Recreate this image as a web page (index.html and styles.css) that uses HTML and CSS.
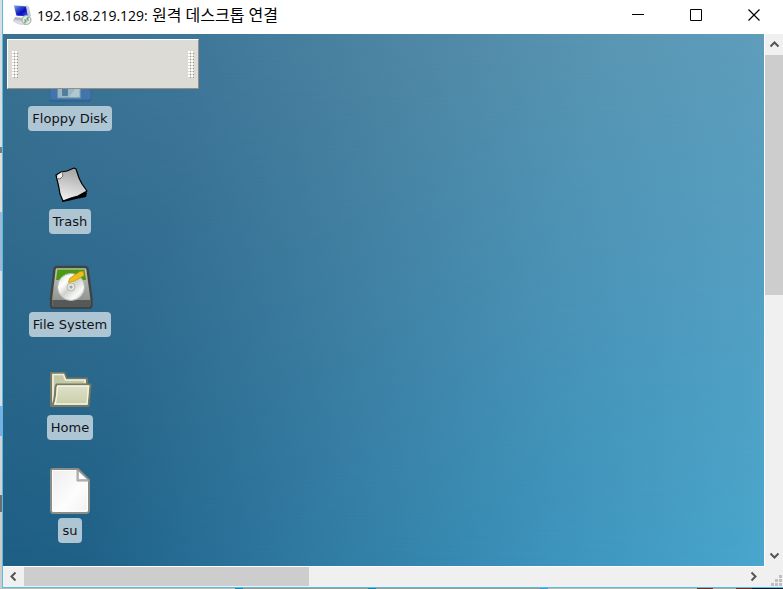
FILE: index.html
```
<!DOCTYPE html>
<html lang="ko">
<head>
<meta charset="utf-8">
<title>192.168.219.129: 원격 데스크톱 연결</title>
<link rel="stylesheet" href="styles.css">
</head>
<body>
<div class="window">
  <header class="titlebar">
    <svg class="app-icon" width="22" height="22" viewBox="0 0 22 22" aria-hidden="true">
      <defs>
        <linearGradient id="screen" x1="0" y1="0" x2="1" y2="1"><stop offset="0" stop-color="#8fa8e6"/><stop offset=".35" stop-color="#2a49c8"/><stop offset=".6" stop-color="#0a08c0"/><stop offset="1" stop-color="#4b6fe6"/></linearGradient>
      </defs>
      <path d="M3 13l9 1 1 7-7-1-5-3z" fill="#b4b8c4"/>
      <path d="M2 16l10 1v4l-6-1-4-2z" fill="#dadce2"/>
      <path d="M14 1l3 2 2 9-3 2z" fill="#c3c7d3"/>
      <path d="M1.500 1l13 1 2 11-12.500-1z" fill="#d5dbec"/>
      <path d="M2 1.500l12 1 2 10-11.500-1z" fill="url(#screen)"/>
      <circle cx="14.500" cy="16" r="4.500" fill="#e3e8e5" stroke="#a2aba6"/>
      <path d="M12.500 15.500l1.500 1.500-1.500 2M16.500 13l-1.500 2 1.500 1.500" fill="none" stroke="#5dab6e" stroke-width="1.400"/>
    </svg>
    <h1 class="title"><span class="address">192.168.219.129:</span> 원격 데스크톱 연결</h1>
    <div class="window-controls">
      <button type="button" aria-label="최소화"><svg width="14" height="14" viewBox="0 0 14 14"><path d="M1 6.500h12" stroke="#000"/></svg></button>
      <button type="button" aria-label="최대화"><svg width="14" height="14" viewBox="0 0 14 14"><path d="M1.500 1.500h11v11h-11z" fill="none" stroke="#000"/></svg></button>
      <button type="button" aria-label="닫기"><svg width="14" height="14" viewBox="0 0 14 14"><path d="M1.500 1.500l11 11M12.500 1.500l-11 11" stroke="#000" stroke-width="1.200"/></svg></button>
    </div>
  </header>

  <div class="viewport">
    <main class="desktop">
      <ul class="icons">
        <li class="item">
          <svg width="48" height="48" viewBox="0 0 48 48" aria-hidden="true">
            <path d="M4 44h41v3H4z" fill="#2c5f85" opacity=".6"/>
            <path d="M5 4h38q2 0 2 2v36q0 3-3 3H6q-2 0-2-3V6q0-2 1-2z" fill="#4176ad" stroke="#34699c"/>
            <path d="M11.500 28h23v15h-23z" fill="#9ab7c7" stroke="#6d8fa6"/>
            <path d="M23 42l10-13v13z" fill="#b0c8d2"/>
            <path d="M16.500 30h5v10.500h-5z" fill="#4b7ea5" stroke="#5a7d95"/>
          </svg>
          <span class="label">Floppy Disk</span>
        </li>
        <li class="item">
          <svg width="48" height="48" viewBox="0 0 48 48" aria-hidden="true">
            <defs><linearGradient id="sheet" x1=".6" y1="0" x2=".4" y2="1"><stop offset="0" stop-color="#a0a0a0"/><stop offset=".5" stop-color="#cacaca"/><stop offset="1" stop-color="#f1f1f1"/></linearGradient></defs>
            <path d="M17 40l22-7 2 2-1 4-10 2-8 2-6 1z" fill="#000"/>
            <path d="M10 17l5-3 6-1 7-3 2 1 3 9 3 6 5 7-9 5-7 2-8 3-3-7-1-6z" fill="url(#sheet)" stroke="#000" stroke-width="1.200" stroke-linejoin="round"/>
            <path d="M11 20l1-3 4-3v5l-3 1z" fill="#f0f0f0"/>
            <path d="M11 20.500l3 .5 3-3-1-3.500" fill="none" stroke="#757575"/>
          </svg>
          <span class="label">Trash</span>
        </li>
        <li class="item">
          <svg width="48" height="48" viewBox="0 0 48 48" aria-hidden="true">
            <defs>
              <linearGradient id="drive" x1="0" y1="0" x2="0" y2="1"><stop offset="0" stop-color="#c5c8c1"/><stop offset="1" stop-color="#858884"/></linearGradient>
              <linearGradient id="disc" x1="0" y1="0" x2="1" y2="1"><stop offset="0" stop-color="#d0d3cc"/><stop offset=".3" stop-color="#fff"/><stop offset=".5" stop-color="#d0d2cc"/><stop offset=".75" stop-color="#fafafa"/><stop offset="1" stop-color="#b6b8b3"/></linearGradient>
            </defs>
            <path d="M11 6h28q2 0 2.500 2l4 29v7q0 3-3 3H8q-3 0-3-3v-7L8.500 8q.5-2 2.500-2z" fill="url(#drive)" stroke="#3f4442" stroke-width="2.400"/>
            <path d="M11.500 8h27l1.500 11H10z" fill="#4c9a13"/>
            <path d="M12 8.500h26" stroke="#83bd59"/>
            <path d="M6.500 39h37.500v5q0 2-2 2H8.500q-2 0-2-2z" fill="#555957"/>
            <circle cx="25" cy="26" r="13.500" fill="url(#disc)" stroke="#b4b7b1"/>
            <circle cx="25" cy="26" r="4" fill="#e3e5e1" stroke="#b4b8b3"/>
            <circle cx="25" cy="26" r="1.500" fill="#9da39f"/>
            <path d="M22.500 21.500l1-4L34 10.500l3.500 0 .5 4-9.500 5.500z" fill="#eebf1c" stroke="#c1960f" stroke-width=".8" stroke-linejoin="round"/>
          </svg>
          <span class="label">File System</span>
        </li>
        <li class="item">
          <svg width="48" height="48" viewBox="0 0 48 48" aria-hidden="true">
            <defs><linearGradient id="folder" x1="0" y1="0" x2="0" y2="1"><stop offset="0" stop-color="#e0e3cb"/><stop offset="1" stop-color="#c8cda6"/></linearGradient></defs>
            <path d="M5 9h13.500l2 5.500H41v10l-3 17.500H5z" fill="#c4c9a5" stroke="#777963" stroke-width="2" stroke-linejoin="round"/>
            <path d="M7 40V10.500h10.500l2 5.500H39v3" fill="none" stroke="#f0f1e3" stroke-width="1.600"/>
            <path d="M10.500 20.500H44.500l-2 21.500H6q3-5 3.500-19z" fill="url(#folder)" stroke="#777963" stroke-width="2" stroke-linejoin="round"/>
            <path d="M12 22h30.500L41 40H9q2-6 2.500-17z" fill="none" stroke="#f2f4e6" stroke-width="1.400"/>
          </svg>
          <span class="label">Home</span>
        </li>
        <li class="item">
          <svg width="48" height="48" viewBox="0 0 48 48" aria-hidden="true">
            <defs><linearGradient id="page" x1="0" y1="0" x2="1" y2="1"><stop offset="0" stop-color="#ededed"/><stop offset=".6" stop-color="#fdfdfd"/><stop offset="1" stop-color="#f0f0f0"/></linearGradient></defs>
            <path d="M7 2h25l11 11v30q0 3-3 3H7q-2 0-2-3V4q0-2 2-2z" fill="url(#page)" stroke="#8b8d89" stroke-width="2"/>
            <path d="M6.500 44V3.500H31M41.500 15v29H7" fill="none" stroke="#fff"/>
            <path d="M31 3v11h12z" fill="#b9bab7" stroke="#a2a4a0" stroke-linejoin="round"/>
            <path d="M33 5v7h7.500z" fill="#fff"/>
          </svg>
          <span class="label">su</span>
        </li>
      </ul>
      <div class="panel"><span class="grip"></span><span class="grip"></span></div>
    </main>

    <div class="scrollbar vertical">
      <button type="button" aria-label="위로"><svg width="11" height="11" viewBox="0 0 11 11"><path d="M1.500 7.500l4-4 4 4"/></svg></button>
      <div class="track"><div class="thumb"></div></div>
      <button type="button" aria-label="아래로"><svg width="11" height="11" viewBox="0 0 11 11"><path d="M1.500 3.500l4 4 4-4"/></svg></button>
    </div>
    <div class="scrollbar horizontal">
      <button type="button" aria-label="왼쪽으로"><svg width="11" height="11" viewBox="0 0 11 11"><path d="M7.500 1.500l-4 4 4 4"/></svg></button>
      <div class="track"><div class="thumb"></div></div>
      <button type="button" aria-label="오른쪽으로"><svg width="11" height="11" viewBox="0 0 11 11"><path d="M3.500 1.500l4 4-4 4"/></svg></button>
    </div>
    <div class="corner"><svg width="11" height="11" viewBox="0 0 11 11" aria-hidden="true"><path d="M8 0h3v3H8zM4 4h3v3H4zM8 4h3v3H8zM0 8h3v3H0zM4 8h3v3H4zM8 8h3v3H8z" fill="#bfbfbf"/></svg></div>
  </div>
</div>
</body>
</html>
```
FILE: styles.css
```
* {
  box-sizing: border-box;
}

body {
  margin: 0;
  height: 100vh;
  padding: 0 0 1px 2px;
  overflow: hidden;
  background:
    linear-gradient(to right, #bbb 30%, #1683b3 30% 31%, #999 31% 47%, #1683b3 47% 48%, #999 48% 69%, #3b9dca 69% 70%, #bbb 70% 89%, #7a2a22 89% 91%, #aaa 91% 94%, #7a2a22 94% 96%, #15152c 96%) bottom / 100% 1px no-repeat,
    linear-gradient(#d8dfe3 0 25%, #6d7f89 25% 26%, #e3ddd5 26% 36%, #9db9d8 36% 46%, #d5dde4 46% 69%, #75b1e6 69% 74%, #d0d3d5 74% 84%, #6b6f72 84% 87%, #ccc 87%);
}

button {
  display: flex;
  align-items: center;
  justify-content: center;
  padding: 0;
  border: 0;
  background: transparent;
}

.window {
  display: flex;
  flex-direction: column;
  height: 100%;
  border-left: 1px solid #5bbcdf;
  border-bottom: 1px solid #5bbcdf;
  background: #fff;
}

.titlebar {
  display: flex;
  align-items: center;
  height: 34px;
  padding: 0 0 4px 9px;
}

.app-icon {
  flex: none;
}

.title {
  flex: 1;
  margin: 0 0 0 3px;
  color: #000;
  font: 400 16px/22px "Open Sans", "Noto Sans CJK KR", sans-serif;
  white-space: nowrap;
}

.address {
  font-size: 14px;
}

.window-controls {
  display: flex;
}

.window-controls button {
  width: 58px;
  height: 30px;
}

.viewport {
  flex: 1;
  display: grid;
  grid-template: minmax(0, 1fr) 21px / minmax(0, 1fr) 19px;
}

.desktop {
  position: relative;
  isolation: isolate;
  overflow: hidden;
  background: linear-gradient(105deg, #3b7292 0%, #40789a 22%, #4f87a5 45%, #5a97b5 68%, #64a3c2 100%);
}

.desktop::before {
  content: "";
  position: absolute;
  inset: 0;
  z-index: -1;
  background: linear-gradient(105deg, #1b5a80 0%, #1f6086 24%, #2f7aa2 50%, #3b93bc 76%, #49a6cc 100%);
  mask-image: linear-gradient(to bottom, transparent, #000);
}

.icons {
  display: flex;
  flex-direction: column;
  gap: 27px;
  width: 134px;
  margin: 0;
  padding: 21px 0 0;
  list-style: none;
}

.item {
  display: flex;
  flex-direction: column;
  align-items: center;
  gap: 3px;
}

.label {
  padding: 0 4px;
  border-radius: 4px;
  background: #aec5d4;
  color: #101418;
  font: 13px/25px "DejaVu Sans", sans-serif;
  white-space: nowrap;
}

.panel {
  position: absolute;
  top: 5px;
  left: 4px;
  display: flex;
  align-items: center;
  justify-content: space-between;
  width: 192px;
  height: 50px;
  padding: 0 4px;
  border: 1px solid;
  border-color: #fff #968c82 #968c82 #fff;
  background: #dcdbd6;
}

/* Dotted handle: a light square with a dark corner pixel, every 3px */
.grip {
  width: 6px;
  height: 27px;
  background:
    conic-gradient(from 90deg at 2px 2px, #96958f 25%, transparent 0) 0 0 / 3px 3px,
    conic-gradient(from 270deg at 2px 2px, #fff 25%, transparent 0) 0 0 / 3px 3px;
}

.scrollbar {
  display: flex;
  background: #f0f0f0;
}

.scrollbar button {
  flex: none;
}

.scrollbar path {
  fill: none;
  stroke: #555;
  stroke-width: 2;
}

.track {
  flex: 1;
}

.thumb {
  background: #cdcdcd;
}

.vertical {
  flex-direction: column;
  border-left: 1px solid #fff;
}

.vertical button {
  height: 21px;
}

.vertical .thumb {
  height: 49%;
}

.horizontal {
  border-top: 1px solid #fff;
  border-bottom: 1px solid #f0f0f0;
}

.horizontal button {
  width: 21px;
}

.horizontal .thumb {
  width: 39.6%;
  height: 100%;
}

.corner {
  display: flex;
  align-items: flex-end;
  justify-content: flex-end;
  padding: 1px;
  background: #f0f0f0;
}
```
